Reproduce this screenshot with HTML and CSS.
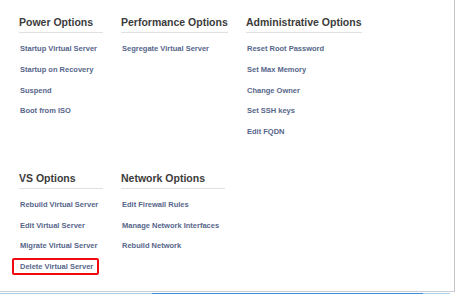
FILE: index.html
```html
<!DOCTYPE html>
<html>
<head>
<meta charset="utf-8">
<link rel="stylesheet" href="styles.css">
</head>
<body>
<div class="panel">
  <div class="row">
    <div class="col w84">
      <h3 class="title">Power Options</h3>
      <ul class="links">
        <li><a>Startup Virtual Server</a></li>
        <li><a>Startup on Recovery</a></li>
        <li><a>Suspend</a></li>
        <li><a>Boot from ISO</a></li>
      </ul>
    </div>
    <div class="col w107">
      <h3 class="title">Performance Options</h3>
      <ul class="links">
        <li><a>Segregate Virtual Server</a></li>
      </ul>
    </div>
    <div class="col w116">
      <h3 class="title">Administrative Options</h3>
      <ul class="links">
        <li><a>Reset Root Password</a></li>
        <li><a>Set Max Memory</a></li>
        <li><a>Change Owner</a></li>
        <li><a>Set SSH keys</a></li>
        <li><a>Edit FQDN</a></li>
      </ul>
    </div>
  </div>
  <div class="row second">
    <div class="col w84">
      <h3 class="title">VS Options</h3>
      <ul class="links">
        <li><a>Rebuild Virtual Server</a></li>
        <li><a>Edit Virtual Server</a></li>
        <li><a>Migrate Virtual Server</a></li>
        <li><a class="marked">Delete Virtual Server</a></li>
      </ul>
    </div>
    <div class="col w104">
      <h3 class="title">Network Options</h3>
      <ul class="links">
        <li><a>Edit Firewall Rules</a></li>
        <li><a>Manage Network Interfaces</a></li>
        <li><a>Rebuild Network</a></li>
      </ul>
    </div>
  </div>
</div>
<div class="strip">
  <div class="seg seg-a"></div>
  <div class="seg seg-b"></div>
  <div class="seg seg-c"></div>
</div>
</body>
</html>
```

FILE: styles.css
```css
html, body {
  margin: 0;
  padding: 0;
  background: #ffffff;
}
body {
  font-family: "Liberation Sans", Arial, sans-serif;
  width: 457px;
  height: 295px;
  overflow: hidden;
}
.panel {
  box-sizing: border-box;
  width: 455px;
  height: 292px;
  padding: 15px 0 0 19px;
  border-right: 1px solid #c4c4c4;
  border-bottom: 1px solid #c9cdd2;
}
.row {
  display: flex;
  gap: 18px;
}
.second {
  margin-top: 28px;
}
.w84 { width: 84px; }
.w104 { width: 104px; }
.w107 { width: 107px; }
.w116 { width: 116px; }
.title {
  margin: 0;
  font-size: 10.5px;
  line-height: 14px;
  font-weight: bold;
  color: #3b3b3b;
  padding-bottom: 3px;
  border-bottom: 1px solid #e0e0e0;
  white-space: nowrap;
}
.links {
  list-style: none;
  margin: 6px 0 0 0;
  padding: 0;
}
.links li {
  height: 20.75px;
  line-height: 20.75px;
  font-size: 7.5px;
  font-weight: bold;
  padding-left: 1px;
  white-space: nowrap;
}
.links a {
  color: #56668a;
}
.marked {
  position: relative;
}
.marked::after {
  content: "";
  position: absolute;
  left: -8px;
  right: -6px;
  top: -4px;
  bottom: -4px;
  border: 2px solid #ee0a10;
  border-radius: 2px;
}
.strip {
  display: flex;
  margin-top: 1px;
  height: 1px;
}
.seg { height: 1px; }
.seg-a { width: 152px; background: #a9cbea; }
.seg-b { width: 271px; background: #3b8ee0; }
.seg-c { width: 27px; background: #a8d3f3; }
```
